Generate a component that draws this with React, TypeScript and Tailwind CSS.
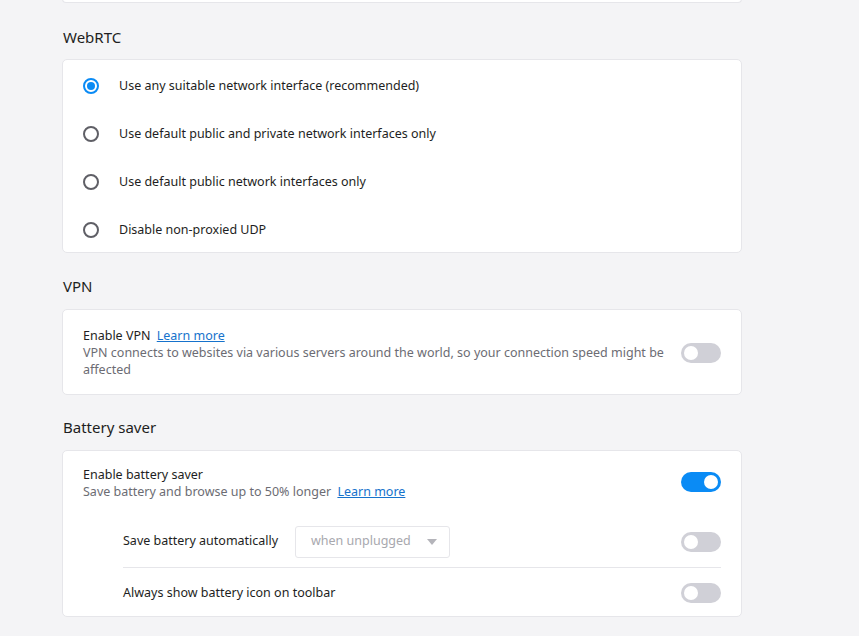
import { useState } from 'react';

const FONT = 'font-["Noto_Sans","Open_Sans",sans-serif]';

function Toggle({ on, onClick, className = '' }: { on: boolean; onClick: () => void; className?: string }) {
  return (
    <button
      onClick={onClick}
      className={`shrink-0 w-10 h-5 rounded-full flex items-center px-[3px] ${on ? 'bg-[#0a8bf5] justify-end' : 'bg-[#d0d0d7] justify-start'} ${className}`}
    >
      <span className="w-[14px] h-[14px] rounded-full bg-white" />
    </button>
  );
}

function Radio({ checked }: { checked: boolean }) {
  return checked ? (
    <span className="w-4 h-4 rounded-full border-2 border-[#0a8bf5] flex items-center justify-center">
      <span className="w-2 h-2 rounded-full bg-[#0a8bf5]" />
    </span>
  ) : (
    <span className="w-4 h-4 rounded-full border-2 border-[#5f5f66]" />
  );
}

const webrtcOptions = [
  'Use any suitable network interface (recommended)',
  'Use default public and private network interfaces only',
  'Use default public network interfaces only',
  'Disable non-proxied UDP',
];

export default function App() {
  const [policy, setPolicy] = useState(0);
  const [vpn, setVpn] = useState(false);
  const [battery, setBattery] = useState(true);
  const [auto, setAuto] = useState(false);
  const [icon, setIcon] = useState(false);

  return (
    <div className={`min-h-[636px] bg-[#f4f4f6] text-[12.5px] text-[#1e1e22] ${FONT}`}>
      <div className="w-[680px] ml-[62px] flex flex-col">
        <div className="h-[4px] -mt-px bg-white border border-t-0 border-[#e6e6ea] rounded-b-[5px]" />

        <h2 className="text-[15px] leading-5 mt-[24px] mb-[12px] pl-px">WebRTC</h2>
        <div className="bg-white border border-[#e6e6ea] rounded-[5px]">
          {webrtcOptions.map((label, i) => (
            <label
              key={label}
              onClick={() => setPolicy(i)}
              className="h-12 pt-1 flex items-center pl-[20px] gap-[20px] cursor-pointer"
            >
              <Radio checked={policy === i} />
              <span>{label}</span>
            </label>
          ))}
        </div>

        <h2 className="text-[15px] leading-5 mt-[23px] mb-[13px] pl-px">VPN</h2>
        <div className="bg-white border border-[#e6e6ea] rounded-[5px] pl-[20px] pr-[20px] pt-[17px] pb-[16px] flex items-center gap-2">
          <div className="flex-1 leading-[17px]">
            <div>
              Enable VPN{' '}
              <a href="#" className="ml-[3px] text-[#1672cc] underline">Learn more</a>
            </div>
            <div className="text-[#6c6c73]">
              VPN connects to websites via various servers around the world, so your connection speed might be affected
            </div>
          </div>
          <Toggle on={vpn} onClick={() => setVpn(!vpn)} />
        </div>

        <h2 className="text-[15px] leading-5 mt-[22px] mb-[13px] pl-px">Battery saver</h2>
        <div className="bg-white border border-[#e6e6ea] rounded-[5px] px-[20px] pt-[15px]">
          <div className="flex items-start gap-6">
            <div className="flex-1 leading-[17px]">
              <div>Enable battery saver</div>
              <div className="text-[#6c6c73]">
                Save battery and browse up to 50% longer{' '}
                <a href="#" className="ml-[3px] text-[#1672cc] underline">Learn more</a>
              </div>
            </div>
            <Toggle on={battery} onClick={() => setBattery(!battery)} className="mt-[6px]" />
          </div>
          <div className="ml-[40px] mt-[16px]">
            <div className="h-[52px] flex items-center border-b border-[#e6e6ea]">
              <span className="w-[172px]">Save battery automatically</span>
              <div className="w-[155px] h-8 border border-[#e6e6ea] rounded-[3px] flex items-center justify-between pl-[15px] pr-[12px] text-[#a8a8ae]">
                <span>when unplugged</span>
                <svg width="10" height="6" viewBox="0 0 10 6"><path d="M0 0h10L5 6z" fill="#b4b4ba" /></svg>
              </div>
              <div className="flex-1" />
              <Toggle on={auto} onClick={() => setAuto(!auto)} />
            </div>
            <div className="h-[48px] pt-[2px] flex items-center">
              <span className="flex-1">Always show battery icon on toolbar</span>
              <Toggle on={icon} onClick={() => setIcon(!icon)} />
            </div>
          </div>
        </div>
      </div>
    </div>
  );
}
